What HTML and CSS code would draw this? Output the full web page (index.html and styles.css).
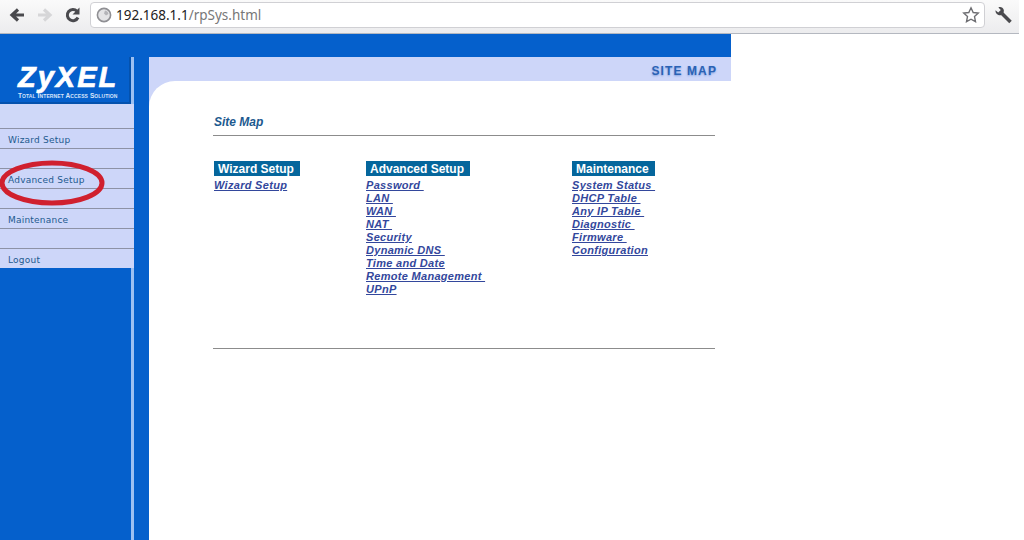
FILE: index.html
```html
<!DOCTYPE html>
<html lang="en">
  <head>
    <meta charset="UTF-8" />
    <meta name="viewport" content="width=device-width, initial-scale=1.0" />
    <title>Site Map</title>
    <link rel="stylesheet" href="styles.css">
  </head>
  <body>
    <div class="toolbar">
      <svg class="nav-icon" width="18" height="18" viewBox="0 0 18 18">
        <path d="M16 9H6M10 3.5 4 9l6 5.5" fill="none" stroke="#4a4a4e" stroke-width="3.2" />
      </svg>
      <svg class="nav-icon" width="18" height="18" viewBox="0 0 18 18">
        <path d="M2 9h10M8 3.5 14 9l-6 5.5" fill="none" stroke="#d6d6d8" stroke-width="3.2" />
      </svg>
      <svg class="nav-icon" width="18" height="18" viewBox="0 0 18 18">
        <path d="M14 11.5A5.6 5.6 0 1 1 13 5.2" fill="none" stroke="#4a4a4e" stroke-width="3" />
        <path d="M15.5 1.5v7h-7z" fill="#4a4a4e" />
      </svg>
      <div class="address">
        <svg class="globe" width="16" height="16" viewBox="0 0 16 16">
          <circle cx="8" cy="8" r="6.6" fill="#e4e4e6" stroke="#8f8f93" stroke-width="1.6" />
          <path d="M9 3.5c2 .4 3.4 1.8 3.4 3.6L10 8.6 8 6.6z" fill="#b4b4b8" />
        </svg>
        <span class="url">192.168.1.1<span class="url-path">/rpSys.html</span></span>
        <svg class="star" width="18" height="18" viewBox="0 0 18 18">
          <path d="M9 1.8l2.2 4.7 5.1.6-3.8 3.5 1 5.1L9 13.2l-4.5 2.5 1-5.1-3.8-3.5 5.1-.6z" fill="#fff" stroke="#6e6e72" stroke-width="1.4" />
        </svg>
      </div>
      <svg class="wrench" width="18" height="18" viewBox="0 0 18 18">
        <path d="M16.5 16 8 7.5" stroke="#4a4a4e" stroke-width="3.6" />
        <path d="M1.5 4.2 4.2 6.6 6.8 4 4.4 1.4C6.6.4 9.2 1.6 9.8 4c.2 1-.1 2.100-.5 2.900L7.200 9C5 9.800 1.200 8 1.500 4.200z" fill="#4a4a4e" />
      </svg>
    </div>

    <div class="router">
      <div class="top-band"></div>
      <div class="router-body">
        <div class="side">
          <div class="logo">
            <div class="logo-name">ZyXEL</div>
            <div class="logo-tag">Total Internet Access Solution</div>
          </div>
          <div class="side-gap"></div>
          <div class="menu-row">Wizard Setup</div>
          <div class="menu-row"></div>
          <div class="menu-row">Advanced Setup</div>
          <div class="menu-row"></div>
          <div class="menu-row">Maintenance</div>
          <div class="menu-row"></div>
          <div class="menu-row">Logout</div>
          <div class="side-tail"></div>
        </div>

        <div class="main">
          <div class="main-head">SITE MAP</div>
          <div class="content">
            <div class="title">Site Map</div>
            <div class="rule"></div>
            <div class="columns">
              <div>
                <div class="col-head">Wizard Setup</div>
                <a class="map-link" href="#">Wizard Setup</a>
              </div>
              <div>
                <div class="col-head">Advanced Setup</div>
                <a class="map-link" href="#">Password </a>
                <a class="map-link" href="#">LAN </a>
                <a class="map-link" href="#">WAN </a>
                <a class="map-link" href="#">NAT </a>
                <a class="map-link" href="#">Security</a>
                <a class="map-link" href="#">Dynamic DNS </a>
                <a class="map-link" href="#">Time and Date</a>
                <a class="map-link" href="#">Remote Management </a>
                <a class="map-link" href="#">UPnP</a>
              </div>
              <div>
                <div class="col-head">Maintenance</div>
                <a class="map-link" href="#">System Status </a>
                <a class="map-link" href="#">DHCP Table </a>
                <a class="map-link" href="#">Any IP Table </a>
                <a class="map-link" href="#">Diagnostic </a>
                <a class="map-link" href="#">Firmware </a>
                <a class="map-link" href="#">Configuration</a>
              </div>
            </div>
            <div class="rule"></div>
          </div>
        </div>
      </div>
    </div>

    <svg class="circle-mark" width="110" height="50" viewBox="0 0 110 50">
      <ellipse cx="52" cy="25" rx="50" ry="20" fill="none" stroke="#d0202e" stroke-width="5" />
    </svg>
  </body>
</html>
```

FILE: styles.css
```css
html,
body {
  height: 100%;
}
body {
  margin: 0;
  background-color: white;
  overflow: hidden;
  font-family: "Liberation Sans", Arial, sans-serif;
}

/* browser chrome */
.toolbar {
  width: 1019px;
  height: 34px;
  box-sizing: border-box;
  border-bottom: 1px solid #b4b8c0;
  background: linear-gradient(#fafafa, #ececee);
  display: flex;
  align-items: center;
  padding: 0 7px 4px 8px;
}
.nav-icon {
  margin-right: 10px;
  flex: none;
}
.address {
  flex: 1;
  height: 26px;
  margin-left: -2px;
  box-sizing: border-box;
  background-color: white;
  border: 1px solid #d0d0d4;
  border-radius: 4px;
  display: flex;
  align-items: center;
  padding: 0 4px 0 5px;
}
.globe {
  flex: none;
}
.url {
  margin-left: 4px;
  font-family: "Noto Sans", sans-serif;
  font-size: 13.5px;
  color: #222;
  flex: 1;
}
.url-path {
  color: #777;
}
.wrench {
  flex: none;
  margin-left: 9px;
}

/* router page */
.router {
  width: 731px;
  height: 506px;
  background-color: #0560cc;
  display: flex;
  flex-direction: column;
}
.top-band {
  height: 23px;
  flex: none;
}
.router-body {
  flex: 1;
  display: flex;
}
.side {
  width: 134px;
  flex: none;
  display: flex;
  flex-direction: column;
}
.logo {
  height: 47px;
  box-sizing: border-box;
  border-right: 3px solid #9cc0f2;
  box-shadow: inset -2px -2px 0 #0452ae;
  padding: 7px 0 0 18px;
  color: white;
}
.logo-name {
  font-size: 29px;
  line-height: 26px;
  font-weight: bold;
  font-style: italic;
  letter-spacing: 2px;
  -webkit-text-stroke: 0.7px white;
}
.logo-tag {
  margin-top: 2px;
  font-size: 6.5px;
  line-height: 8px;
  font-weight: bold;
  font-variant: small-caps;
  white-space: nowrap;
  letter-spacing: 0.1px;
  color: #d8e4fa;
}
.side-gap {
  height: 24px;
  background-color: #cfd8f8;
}
.menu-row {
  height: 20px;
  box-sizing: border-box;
  border-top: 1px solid #8d92a6;
  background-color: #cdd6f9;
  padding-left: 8px;
  font-family: "DejaVu Sans", sans-serif;
  font-size: 9px;
  line-height: 22px;
  letter-spacing: 0.22px;
  color: #1d5a8f;
}
.side-tail {
  flex: 1;
  border-right: 3px solid #9cc0f2;
}
.main {
  flex: 1;
  margin-left: 15px;
  display: flex;
  flex-direction: column;
  background-color: #cdd6f9;
}
.main-head {
  height: 24px;
  flex: none;
  box-sizing: border-box;
  padding-right: 14px;
  text-align: right;
  font-size: 12px;
  line-height: 29px;
  font-weight: bold;
  letter-spacing: 1.1px;
  color: #2a62b4;
  text-shadow: 0 1px 2px #7f9ede;
}
.content {
  flex: 1;
  background-color: white;
  border-top-left-radius: 26px;
  padding: 34px 16px 0 64px;
}
.title {
  font-size: 12px;
  line-height: 14px;
  font-weight: bold;
  font-style: italic;
  color: #1d5a8f;
  padding-left: 1px;
}
.rule {
  height: 1px;
  background-color: #8c8c8c;
  margin-top: 6px;
}
.columns {
  display: grid;
  grid-template-columns: 152px 206px auto;
  height: 206px;
  padding: 25px 0 0 1px;
  box-sizing: border-box;
}
.col-head {
  width: fit-content;
  height: 15px;
  background-color: #05669c;
  color: white;
  font-size: 12px;
  line-height: 17px;
  font-weight: bold;
  padding: 0 6px 0 4px;
  margin-bottom: 3px;
}
.map-link {
  display: table;
  white-space: pre;
  font-size: 11px;
  line-height: 13px;
  font-weight: bold;
  font-style: italic;
  letter-spacing: 0.3px;
  color: #33479c;
}

/* red mark drawn over the menu */
.circle-mark {
  position: absolute;
  left: 0;
  top: 158px;
}
```
